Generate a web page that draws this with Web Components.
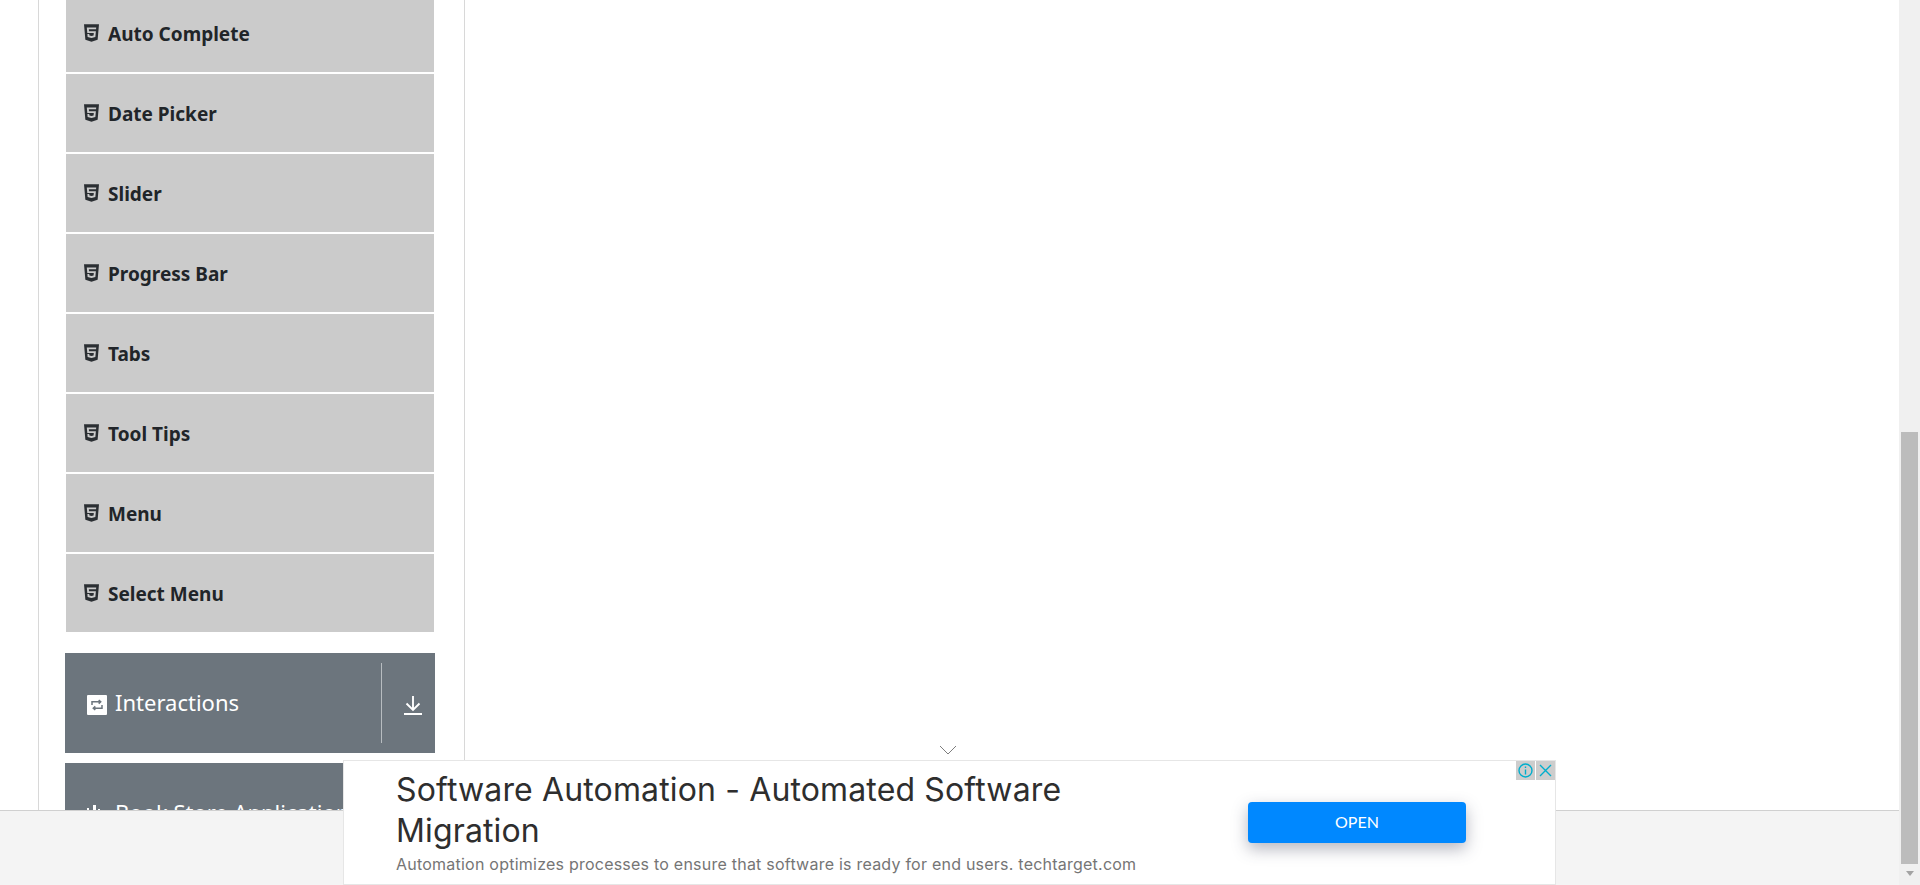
<!DOCTYPE html>
<html>
<head>
<meta charset="utf-8">
<title>Widgets</title>
<style>
  html, body { margin: 0; height: 100%; overflow: hidden; background: #fff; }
  body { font-family: "Noto Sans", "Open Sans", sans-serif; }
</style>
</head>
<body>
<tools-page>
  <side-panel>
    <menu-item>Auto Complete</menu-item>
    <menu-item>Date Picker</menu-item>
    <menu-item>Slider</menu-item>
    <menu-item>Progress Bar</menu-item>
    <menu-item>Tabs</menu-item>
    <menu-item>Tool Tips</menu-item>
    <menu-item>Menu</menu-item>
    <menu-item>Select Menu</menu-item>
    <menu-group icon="retweet" style="margin-top:19px">Interactions</menu-group>
    <menu-group icon="book" style="margin-top:10px">Book Store Application</menu-group>
  </side-panel>
</tools-page>
<ad-banner></ad-banner>

<script>
class ToolsPage extends HTMLElement {
  connectedCallback() {
    this.attachShadow({ mode: 'open' });
    this.shadowRoot.innerHTML = `
      <style>
        :host { display: flex; height: 885px; }
        .page { flex: 1; min-width: 0; display: flex; flex-direction: column; }
        .main { flex: 1; min-height: 0; overflow: hidden; padding-left: 38px; }
        .foot { height: 74px; background: #f4f4f4; border-top: 1px solid #d0d0d0; }
        .bar { width: 21px; background: #f0f0f0; display: flex; flex-direction: column; align-items: center; padding-top: 432px; box-sizing: border-box; }
        .thumb { width: 17px; height: 432px; background: #bcbcbc; }
        .arrow { margin-top: 7px; width: 0; height: 0; border: 4.5px solid transparent; border-top: 5px solid #a3a3a3; border-bottom: 0; }
      </style>
      <div class="page">
        <div class="main"><slot></slot></div>
        <div class="foot"></div>
      </div>
      <div class="bar"><div class="thumb"></div><div class="arrow"></div></div>
    `;
  }
}
customElements.define('tools-page', ToolsPage);

class SidePanel extends HTMLElement {
  connectedCallback() {
    this.attachShadow({ mode: 'open' });
    this.shadowRoot.innerHTML = `
      <style>
        :host {
          display: block;
          width: 427px;
          box-sizing: border-box;
          border-left: 1px solid #d8d8d8;
          border-right: 1px solid #d8d8d8;
          padding: 0 29px 0 26px;
          height: 900px;
        }
        /* list is scrolled a little past the top of the window */
        .list { display: flex; flex-direction: column; margin-top: -6px; }
      </style>
      <div class="list"><slot></slot></div>
    `;
  }
}
customElements.define('side-panel', SidePanel);

class MenuItem extends HTMLElement {
  connectedCallback() {
    this.attachShadow({ mode: 'open' });
    this.shadowRoot.innerHTML = `
      <style>
        :host {
          display: flex;
          align-items: center;
          gap: 9px;
          height: 78px;
          margin-bottom: 2px;
          margin-left: 1px;
          margin-right: 1px;
          padding-left: 18px;
          background: #cbcbcb;
          color: #212529;
          font-size: 19px;
          font-weight: 700;
        }
        svg { width: 15px; height: 20px; fill: #2b2f33; margin-top: -1px; flex: none; }
        span { margin-top: 1px; }
      </style>
      <svg viewBox="0 0 384 512"><path d="M0 32l34.9 395.8L191.5 480l157.6-52.2L384 32H0zm308.2 127.9H124.4l4.1 49.4h175.6l-13.6 148.4-97.900 27v.3h-1.100l-98.700-27.300-6-75.800h47.700L138 320l53.500 14.500 53.700-14.500 6-62.200H84.300L71.500 112.200h241.100l-4.400 47.700z"/></svg>
      <span><slot></slot></span>
    `;
  }
}
customElements.define('menu-item', MenuItem);

const groupIcons = {
  retweet: `<svg class="ic" viewBox="0 0 20 20"><rect width="20" height="20" rx="1" fill="#fff"/><path d="M5 10V6.800h8.500M11.700 5l2 1.800-2 1.800M15 10v3.200H6.500M8.300 11.400l-2 1.800 2 1.800" fill="none" stroke="#6c757d" stroke-width="1.500"/></svg>`,
  book: `<svg class="ic" viewBox="0 0 20 20"><path d="M0 3h2v17H0zM6 0h3v20H6zM11 4h2v16h-2z" fill="#fff"/></svg>`
};

class MenuGroup extends HTMLElement {
  connectedCallback() {
    const icon = groupIcons[this.getAttribute('icon')] || '';
    this.attachShadow({ mode: 'open' });
    this.shadowRoot.innerHTML = `
      <style>
        :host {
          display: flex;
          align-items: center;
          height: 100px;
          background: #6c757d;
          color: #fff;
          font-size: 22px;
          font-weight: 400;
          white-space: nowrap;
          overflow: hidden;
        }
        .label { flex: 1; min-width: 0; display: flex; align-items: center; gap: 8px; padding-left: 22px; }
        .label span { margin-top: -3px; }
        .ic { width: 20px; height: 20px; flex: none; margin-top: 4px; }
        .side { width: 53px; height: 80px; flex: none; border-left: 1px solid #b7bcc0; display: flex; align-items: center; justify-content: center; }
        .side svg { width: 20px; height: 20px; margin-top: 3px; margin-left: 8px; }
      </style>
      <div class="label">${icon}<span><slot></slot></span></div>
      <div class="side">
        <svg viewBox="0 0 20 20" fill="none" stroke="#fff" stroke-width="1.900"><path d="M10 1v14M3.500 8.500L10 15l6.500-6.500M1 19h18"/></svg>
      </div>
    `;
  }
}
customElements.define('menu-group', MenuGroup);

class AdBanner extends HTMLElement {
  connectedCallback() {
    this.attachShadow({ mode: 'open' });
    this.shadowRoot.innerHTML = `
      <style>
        :host {
          position: fixed;
          left: 343px;
          top: 760px;
          width: 1213px;
          height: 125px;
          box-sizing: border-box;
          background: #fff;
          border: 1px solid #e6e6e6;
          display: flex;
          align-items: center;
          font-family: "Inter", "Roboto", sans-serif;
        }
        .chev { position: absolute; left: 595px; top: -16px; width: 18px; height: 11px; }
        .copy { width: 904px; padding-left: 52px; flex: none; box-sizing: border-box; }
        h1 { margin: -1px 0 1px; max-width: 720px; font-size: 32px; line-height: 41px; font-weight: 400; color: #2e2e2e; letter-spacing: .14px; }
        p { margin: 2px 0 0; font-size: 16px; line-height: 22px; color: #757575; white-space: nowrap; letter-spacing: .23px; }
        .open {
          width: 218px;
          height: 41px;
          box-sizing: border-box;
          padding-bottom: 2px;
          flex: none;
          margin-top: -1px;
          border-radius: 4px;
          background: #0088ff;
          color: #fff;
          font: 400 16px "Lato", sans-serif;
          display: flex;
          align-items: center;
          justify-content: center;
          box-shadow: 0 6px 16px rgba(60,64,90,.38);
        }
        .btns { position: absolute; right: 0; top: 0; display: flex; gap: 1px; }
        .btns span { width: 19px; height: 19px; background: #cdcdcd; display: block; }
        .btns svg { display: block; width: 19px; height: 19px; }
      </style>
      <svg class="chev" viewBox="0 0 18 11" fill="none" stroke="#7d7d7d"><path d="M1 1l8 8 8-8"/></svg>
      <div class="copy">
        <h1>Software Automation - Automated Software Migration</h1>
        <p>Automation optimizes processes to ensure that software is ready for end users. techtarget.com</p>
      </div>
      <div class="open">OPEN</div>
      <div class="btns">
        <span><svg viewBox="0 0 19 19" fill="none" stroke="#00aecd" stroke-width="1.400"><circle cx="9.500" cy="9.500" r="6.500"/><path d="M9.500 8.500v5M9.500 5.500v1.500"/></svg></span>
        <span><svg viewBox="0 0 19 19" fill="none" stroke="#00aecd" stroke-width="1.400"><path d="M4 4l11 11M15 4L4 15"/></svg></span>
      </div>
    `;
  }
}
customElements.define('ad-banner', AdBanner);
</script>
</body>
</html>
